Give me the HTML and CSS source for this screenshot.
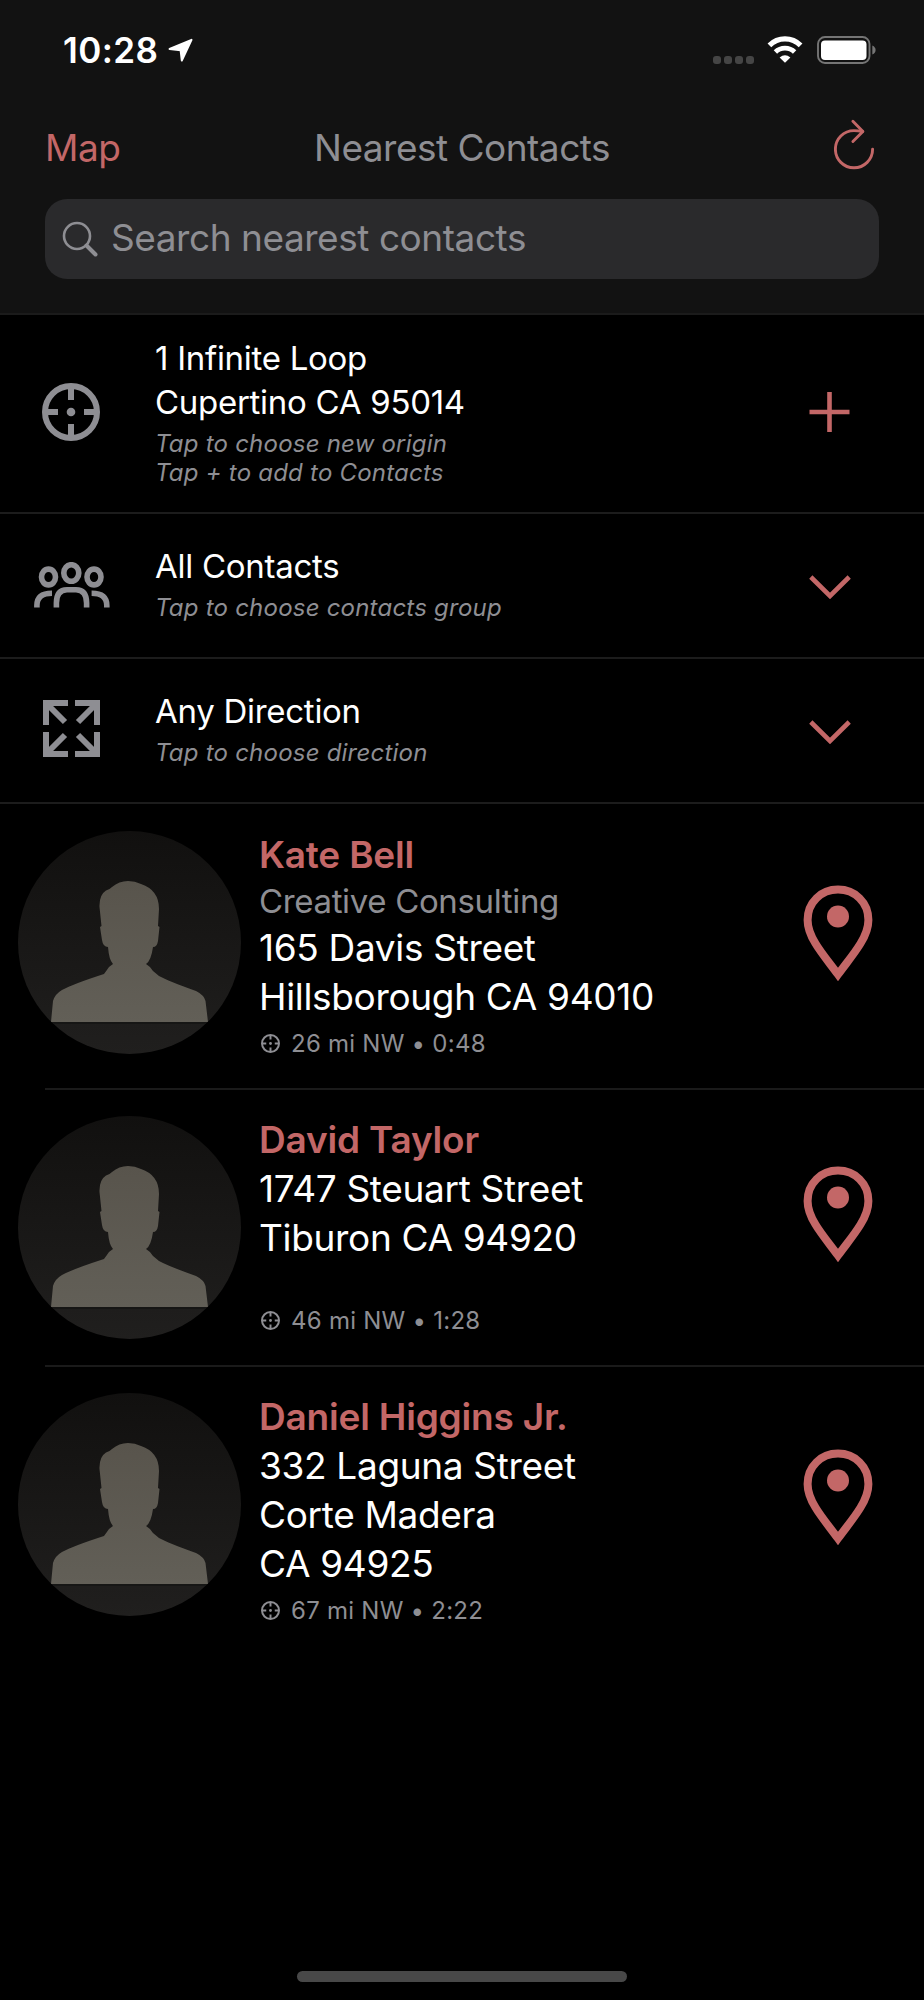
FILE: index.html
```html
<!DOCTYPE html>
<html lang="en">
<head>
    <meta charset="UTF-8">
    <meta name="viewport" content="width=device-width, initial-scale=1.0">
    <title>Nearest Contacts</title>
    <link rel="stylesheet" href="styles.css">
</head>
<body>
    <!-- Shared icons -->
    <svg class="sprite" width="0" height="0">
        <defs>
            <linearGradient id="avatar-bg" x1="0" y1="0" x2="0" y2="1">
                <stop offset="0" stop-color="#11100f"/>
                <stop offset="1" stop-color="#201f1e"/>
            </linearGradient>
            <linearGradient id="avatar-fg" x1="0" y1="0" x2="0" y2="1">
                <stop offset="0" stop-color="#58544c"/>
                <stop offset="1" stop-color="#625f57"/>
            </linearGradient>
            <clipPath id="avatar-clip"><circle cx="111.5" cy="111.5" r="111.5"/></clipPath>
        </defs>
        <symbol id="target" viewBox="0 0 58 58">
            <circle cx="29" cy="29" r="26" fill="none" stroke="currentColor" stroke-width="6"/>
            <path d="M29 3v14M29 41v14M3 29h13M42 29h13" stroke="currentColor" stroke-width="6"/>
            <circle cx="29" cy="29" r="4.3" fill="currentColor"/>
        </symbol>
        <symbol id="chevron" viewBox="0 0 42 24">
            <path d="M1.8 2L21 21L40.2 2" fill="none" stroke="currentColor" stroke-width="4.6"/>
        </symbol>
        <symbol id="pin" viewBox="0 0 70 96">
            <path d="M35 89.500C27 78.500 18.500 68.500 12.500 58.500C7.500 50.500 4.600 44 4.600 35C4.600 17.500 18 4.600 35 4.600S65.400 17.500 65.400 35C65.400 44 62.500 50.500 57.500 58.500C51.500 68.500 43 78.500 35 89.500Z" fill="none" stroke="currentColor" stroke-width="8"/>
            <circle cx="35" cy="31.500" r="11" fill="currentColor"/>
        </symbol>
        <symbol id="avatar" viewBox="0 0 223 223">
            <g clip-path="url(#avatar-clip)">
                <rect width="223" height="223" fill="url(#avatar-bg)"/>
                <path d="M33 191L35 170Q37 163 44 159Q55 153 86 143Q89 139 91 136L95 133Q91 129 90 116Q85 116 84 109L82 96L83.500 95L81.500 76Q81 64 88 59.500Q92 58 94 56Q101 50 110 50Q117 50 123 53Q141 59 141 78L140 95L141.500 96L140 110Q139 116 135 116Q133 130 128 133Q133 136 135 140L141 145Q150 150 178 160Q186 164 187.500 170L190 191Z" fill="url(#avatar-fg)"/>
                <path d="M30 192H193" stroke="#151413" stroke-width="1.500"/>
            </g>
        </symbol>
    </svg>

    <header class="header">
        <div class="status-bar">
            <span class="time">10:28</span>
            <svg class="location" width="25" height="25" viewBox="0 0 25 25">
                <path d="M23.500 1.800L13.800 22.500L12.600 12.200L1.600 11Z" fill="#fff" stroke="#fff" stroke-width="2" stroke-linejoin="round"/>
            </svg>
            <div class="signal"><i></i><i></i><i></i><i></i></div>
            <svg class="wifi" width="36" height="27" viewBox="0 0 36 27">
                <path d="M2.400 9.300A22 22 0 0 1 33.600 9.300" fill="none" stroke="#fff" stroke-width="5.200"/>
                <path d="M8.400 16A13.600 13.600 0 0 1 27.600 16" fill="none" stroke="#fff" stroke-width="4.800"/>
                <path d="M12.600 21.400Q18 17 23.400 21.400L18 26.800Z" fill="#fff"/>
            </svg>
            <svg class="battery" width="59" height="28" viewBox="0 0 59 28">
                <rect x="1" y="1" width="51.500" height="26" rx="7" fill="none" stroke="#757575" stroke-width="1.900"/>
                <rect x="4" y="4.500" width="45.500" height="19.500" rx="4" fill="#fff"/>
                <path d="M55.300 9.500Q58.600 11 58.600 14T55.300 18.500Z" fill="#757575"/>
            </svg>
        </div>
        <div class="nav-bar">
            <a class="nav-link">Map</a>
            <h1 class="title">Nearest Contacts</h1>
            <svg class="refresh" width="42" height="52" viewBox="0 0 42 52">
                <g fill="none" stroke="currentColor" stroke-width="2.900" stroke-linecap="round" stroke-linejoin="round">
                    <path d="M28.600 12.500Q24 11.600 20 11.600A18.600 18.600 0 1 0 38.600 30.200"/>
                    <path d="M18.900 2.300L28.900 12.400L18.900 22.500"/>
                </g>
            </svg>
        </div>
        <div class="search">
            <svg width="36" height="37" viewBox="0 0 36 37">
                <circle cx="15" cy="15" r="13" fill="none" stroke="currentColor" stroke-width="2.600"/>
                <path d="M24.500 24.500L33.500 33.500" stroke="currentColor" stroke-width="4" stroke-linecap="round"/>
            </svg>
            <span class="placeholder">Search nearest contacts</span>
        </div>
    </header>

    <main>
        <section class="option origin">
            <svg class="option-icon" width="58" height="58"><use href="#target"/></svg>
            <div class="option-text">
                <p class="option-title">1 Infinite Loop<br>Cupertino CA 95014</p>
                <p class="hint">Tap to choose new origin<br>Tap + to add to Contacts</p>
            </div>
            <svg class="action" width="42" height="42" viewBox="0 0 42 42">
                <path d="M20.500 1V41M.5 21H40.500" stroke="currentColor" stroke-width="4.600"/>
            </svg>
        </section>
        <section class="option">
            <svg class="option-icon group" width="76" height="46" viewBox="0 0 76 46">
                <g fill="none" stroke="currentColor" stroke-width="5.600">
                    <ellipse cx="14.500" cy="15" rx="7" ry="7.900"/>
                    <ellipse cx="37.300" cy="11" rx="7.500" ry="8.300"/>
                    <ellipse cx="60" cy="15" rx="7" ry="7.900"/>
                    <path d="M22.400 45.500V41Q22.400 27.700 33 27.700H42Q52.600 27.700 52.600 41V45.500"/>
                    <path d="M2.900 45.500V43.500Q2.900 31.300 18 31.300M72.800 45.500V43.500Q72.800 31.300 57.600 31.300"/>
                </g>
            </svg>
            <div class="option-text">
                <p class="option-title">All Contacts</p>
                <p class="hint">Tap to choose contacts group</p>
            </div>
            <svg class="action chevron" width="42" height="24"><use href="#chevron"/></svg>
        </section>
        <section class="option">
            <svg class="option-icon expand" width="57" height="57" viewBox="0 0 57 57">
                <g fill="none" stroke="currentColor" stroke-width="6">
                    <path d="M25 3H3V25M3 3L22 22"/>
                    <path d="M32 3H54V25M54 3L35 22"/>
                    <path d="M25 54H3V32M3 54L22 35"/>
                    <path d="M32 54H54V32M54 54L35 35"/>
                </g>
            </svg>
            <div class="option-text">
                <p class="option-title">Any Direction</p>
                <p class="hint">Tap to choose direction</p>
            </div>
            <svg class="action chevron" width="42" height="24"><use href="#chevron"/></svg>
        </section>

        <ul class="contacts">
            <li class="contact">
                <svg class="avatar" width="223" height="223"><use href="#avatar"/></svg>
                <div class="info">
                    <h2 class="name">Kate Bell</h2>
                    <p class="company">Creative Consulting</p>
                    <p class="address">165 Davis Street<br>Hillsborough CA 94010</p>
                    <p class="distance"><svg width="19" height="19"><use href="#target"/></svg>26 mi NW • 0:48</p>
                </div>
                <svg class="pin" width="70" height="96"><use href="#pin"/></svg>
            </li>
            <li class="contact">
                <svg class="avatar" width="223" height="223"><use href="#avatar"/></svg>
                <div class="info">
                    <h2 class="name">David Taylor</h2>
                    <p class="address">1747 Steuart Street<br>Tiburon CA 94920</p>
                    <p class="distance"><svg width="19" height="19"><use href="#target"/></svg>46 mi NW • 1:28</p>
                </div>
                <svg class="pin" width="70" height="96"><use href="#pin"/></svg>
            </li>
            <li class="contact">
                <svg class="avatar" width="223" height="223"><use href="#avatar"/></svg>
                <div class="info">
                    <h2 class="name">Daniel Higgins Jr.</h2>
                    <p class="address">332 Laguna Street<br>Corte Madera<br>CA 94925</p>
                    <p class="distance"><svg width="19" height="19"><use href="#target"/></svg>67 mi NW • 2:22</p>
                </div>
                <svg class="pin" width="70" height="96"><use href="#pin"/></svg>
            </li>
        </ul>
    </main>
    <div class="home-bar"></div>
</body>
</html>
```
FILE: styles.css
```css
* {
    box-sizing: border-box;
}
body {
    margin: 0;
    height: 2000px;
    display: flex;
    flex-direction: column;
    align-items: stretch;
    background-color: #000;
    color: #fff;
    font-family: Inter, "Liberation Sans", sans-serif;
}
h1, h2, p, ul {
    margin: 0;
    padding: 0;
}
svg {
    display: block;
    flex-shrink: 0;
}
.sprite {
    position: absolute;
}
.header {
    height: 315px;
    padding: 0 45px;
    background-color: #121212;
    border-bottom: 2px solid #1b1b1b;
}
.status-bar {
    display: flex;
    height: 101px;
    padding-left: 18px;
}
.time {
    margin-top: 29px;
    width: 105px;
    font-size: 35px;
    line-height: 42px;
    font-weight: 600;
    letter-spacing: 0.4px;
}
.location {
    margin-top: 38px;
}
.signal {
    display: flex;
    gap: 3px;
    margin: 56px 0 0 auto;
}
.signal i {
    width: 8px;
    height: 8px;
    border-radius: 3px;
    background-color: #454545;
}
.wifi {
    margin: 36px 0 0 13px;
}
.battery {
    margin: 36px 3px 0 14px;
}
.nav-bar {
    display: flex;
    height: 98px;
    font-size: 37px;
    line-height: 48px;
    letter-spacing: -0.5px;
}
.nav-link, .refresh {
    color: #c36767;
}
.nav-link {
    width: 269px;
    padding-top: 23px;
}
.title {
    flex: 1;
    padding-top: 23px;
    font-size: 37px;
    font-weight: 400;
    color: #8e8e93;
}
.refresh {
    margin: 18px 3px 0 0;
}
.search {
    display: flex;
    align-items: center;
    height: 80px;
    padding-left: 17px;
    gap: 13px;
    border-radius: 22px;
    background-color: #2a2a2c;
    color: #8e8e93;
    font-size: 37px;
    letter-spacing: -0.45px;
}
.placeholder {
    padding-bottom: 4px;
}
.option {
    display: flex;
    height: 145px;
    border-bottom: 2px solid #1c1c1c;
    align-items: center;
}
.option.origin {
    height: 199px;
}
.option-icon {
    margin-left: 42px;
    margin-right: 55px;
    margin-bottom: 4px;
    color: #8e8e93;
}
.option-icon.group {
    margin-left: 34px;
    margin-right: 45px;
    margin-bottom: 2px;
}
.option-icon.expand {
    margin-left: 43px;
}
.option-text {
    flex: 1;
    margin-top: -5px;
}
.option-title {
    font-size: 33px;
    line-height: 44px;
    letter-spacing: -0.28px;
}
.hint {
    margin-top: 5px;
    font-size: 24px;
    line-height: 29px;
    font-style: italic;
    color: #8e8e93;
    letter-spacing: 0.22px;
}
.action {
    margin-right: 73px;
    margin-bottom: 4px;
    color: #c36767;
}
.action.chevron {
    margin-bottom: -2px;
}
.contacts {
    list-style: none;
}
.contact {
    display: flex;
    position: relative;
    padding: 25px 51px 27px 18px;
}
.contact:first-child {
    padding-top: 26px;
}
/* inset separator */
.contact:not(:last-child)::after {
    content: "";
    position: absolute;
    left: 45px;
    right: 0;
    bottom: 0;
    height: 2px;
    background-color: #1a1a1a;
}
.avatar {
    margin-top: 1px;
}
.info {
    display: flex;
    flex-direction: column;
    flex: 1;
    min-height: 225px;
    margin-left: 18px;
    padding-bottom: 5px;
}
.name {
    font-size: 37px;
    line-height: 49px;
    font-weight: 600;
    color: #c36767;
    letter-spacing: -0.2px;
}
.company {
    font-size: 33px;
    line-height: 44px;
    color: #8e8e93;
    letter-spacing: -0.35px;
}
.address {
    font-size: 37px;
    line-height: 49px;
    letter-spacing: -0.33px;
}
.distance {
    display: flex;
    align-items: center;
    gap: 11px;
    margin-top: auto;
    padding: 8px 0 0 2px;
    font-size: 24px;
    line-height: 29px;
    color: #8e8e93;
    letter-spacing: 0.25px;
}
.pin {
    align-self: center;
    margin-top: -28px;
    color: #c36767;
}
.home-bar {
    width: 330px;
    height: 11px;
    margin: auto auto 18px;
    border-radius: 6px;
    background-color: #484848;
}
```
